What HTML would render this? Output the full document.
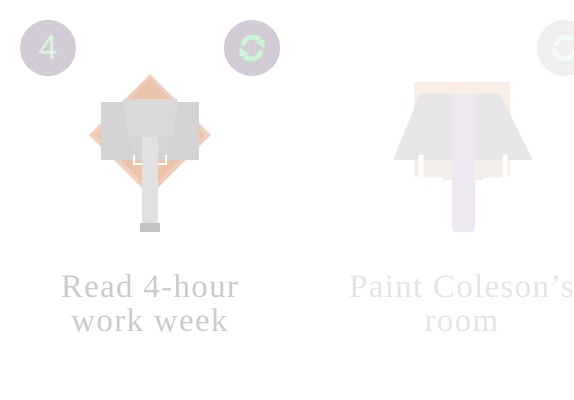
<!DOCTYPE html>
<html><head><style>
body{margin:0;width:574px;height:400px;background:#fff;position:relative;overflow:hidden;font-family:"Liberation Serif",serif}
.c{position:absolute;border-radius:50%;width:56px;height:56px;top:20px}
.t{position:absolute;top:270px;width:300px;text-align:center;font-size:33px;line-height:34px;letter-spacing:1.3px;color:#cbcbcb}
</style></head><body>
<div class="c" style="left:20px;background:#d3cbd6;color:#d8f5df;font-family:'Liberation Sans',sans-serif;font-size:34px;font-weight:300;text-align:center;line-height:56px">4</div>
<div class="c" style="left:224px;background:#d3cbd6"></div>
<svg style="position:absolute;left:234px;top:30px" width="36" height="36" viewBox="0 0 36 36"><g fill="none" stroke="#c9f5d5" stroke-width="5"><path d="M9 16a10 10 0 0 1 17-6"/><path d="M27 20a10 10 0 0 1-17 6"/></g><path d="M21 12l10-3-1 10z" fill="#c9f5d5"/><path d="M15 24l-10 3 1-10z" fill="#c9f5d5"/></svg>
<div class="c" style="left:537px;background:#efefef"></div>
<svg style="position:absolute;left:547px;top:30px" width="36" height="36" viewBox="0 0 36 36"><g fill="none" stroke="#f3fbf5" stroke-width="5"><path d="M9 16a10 10 0 0 1 17-6"/><path d="M27 20a10 10 0 0 1-17 6"/></g><path d="M15 24l-10 3 1-10z" fill="#f3fbf5"/></svg>
<svg style="position:absolute;left:0;top:0" width="574" height="260">
<polygon points="150,74 211,135 150,196 89,135" fill="#efd0bf"/>
<polygon points="150,78 205,135 150,190 95,135" fill="#ecc3ab"/>
<rect x="101" y="102" width="98" height="58" fill="#d4d3d3"/>
<polygon points="123,99 178,99 173,137 128,137" fill="#dad9d9"/>
<rect x="133" y="137" width="34" height="20" fill="#d6d5d5"/>
<rect x="142" y="137" width="16" height="88" fill="#e2e1e1"/>
<rect x="140" y="223" width="20" height="9" fill="#c4c3c3"/>
<path d="M134 155v9h8M166 155v9h-8" stroke="#fff" stroke-width="2" fill="none"/>
<rect x="414" y="82" width="96" height="95" fill="#f9ede5"/>
<polygon points="420,94 500,94 533,160 393,160" fill="#e9e6ea"/>
<rect x="420" y="160" width="86" height="20" fill="#f4eeea"/>
<rect x="452" y="94" width="23" height="138" rx="4" fill="#ede7ef"/>
<path d="M421 155v25h22M505 155v25h-22" stroke="#fff" stroke-width="5" fill="none"/>
</svg>
<div class="t" style="left:0">Read 4-hour<br>work week</div>
<div class="t" style="left:312px;color:#e5e5e5">Paint Coleson’s<br>room</div>
</body></html>
